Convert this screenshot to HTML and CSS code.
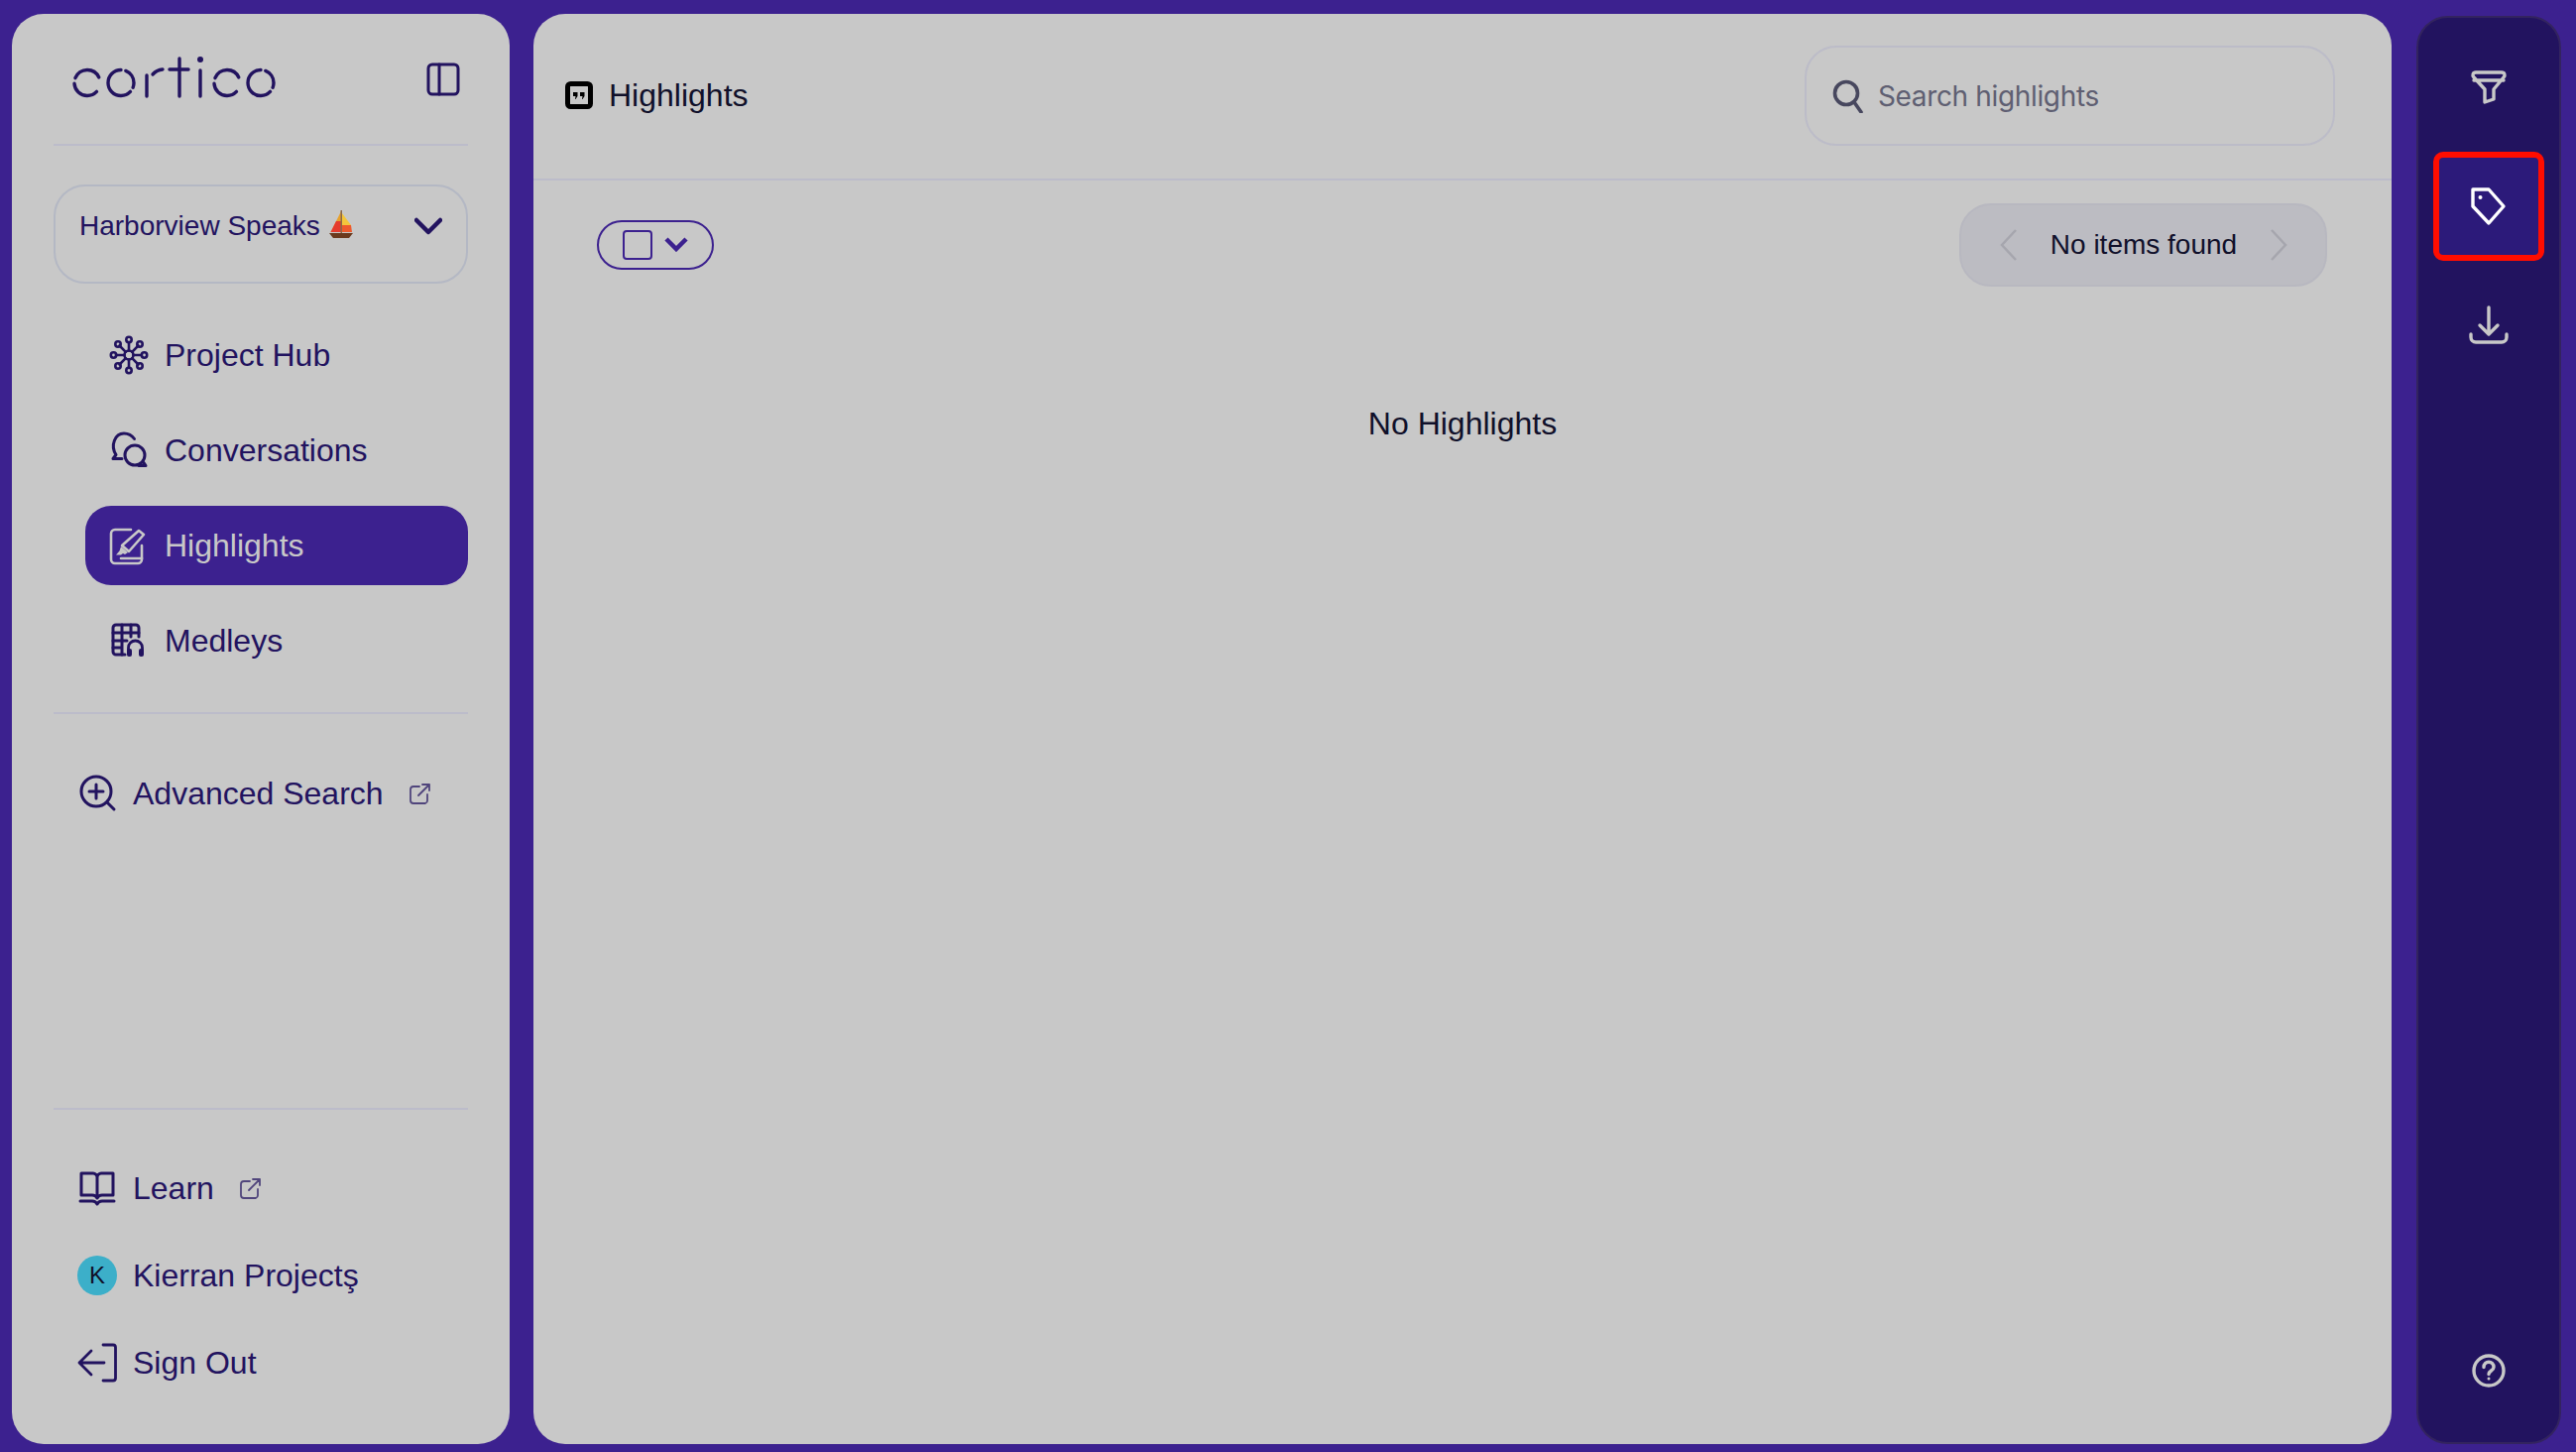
FILE: index.html
```html
<!DOCTYPE html>
<html lang="en">
<head>
<meta charset="utf-8">
<title>Cortico Highlights</title>
<link rel="stylesheet" href="styles.css">
</head>
<body>
<div class="app">
  <aside class="sidebar">
    <div class="logo-row">
      <svg class="logo" role="img" aria-label="cortico" width="210" height="44" viewBox="0 0 210 44">
        <g class="logo-strokes">
          <circle cx="15" cy="27.5" r="13" pathLength="100" stroke-dasharray="37 7 37 19" stroke-dashoffset="-12"/>
          <circle cx="49" cy="27.5" r="13" pathLength="100" stroke-dasharray="6 6 63 6 19" stroke-dashoffset="0"/>
          <line x1="75" y1="20" x2="75" y2="41"/>
          <path d="M81 19q4-4.500 10-5"/>
          <line x1="108" y1="3" x2="108" y2="41"/>
          <line x1="98" y1="14" x2="117" y2="14"/>
          <line x1="129" y1="15" x2="129" y2="41"/>
          <circle class="logo-dot" cx="129" cy="4" r="3"/>
          <circle cx="156" cy="27.500" r="13" pathLength="100" stroke-dasharray="37 7 37 19" stroke-dashoffset="-12"/>
          <circle cx="190" cy="27.500" r="13" pathLength="100" stroke-dasharray="6 6 63 6 19" stroke-dashoffset="0"/>
        </g>
      </svg>
      <svg class="ico" width="34" height="34" viewBox="0 0 34 34" stroke-width="3"><rect x="2" y="2" width="30" height="30" rx="4"/><line x1="13" y1="2" x2="13" y2="32"/></svg>
    </div>

    <div class="selector">
      <span class="selector-name">Harborview Speaks
        <svg class="boat" width="24" height="28" viewBox="0 0 24 28"><path fill="#e8a12c" d="M12 1 1.500 22H12z"/><path fill="#e53b2e" d="M7 11 1.500 22H12V11z"/><path fill="#f4c63c" d="M13 3l9 12h-9z"/><path fill="#ee5a2e" d="M13 15h9l1 7H13z"/><rect x="11.500" y="0" width="1.500" height="25" fill="#8a6a4a"/><path fill="#6b3a1e" d="M0 23h24l-4 5H4z"/></svg>
      </span>
      <svg class="ico chevron" width="28" height="18" viewBox="0 0 28 18" stroke-width="4.500"><path d="M2 3l12 12L26 3"/></svg>
    </div>

    <nav class="nav">
      <a class="nav-item">
        <svg class="ico" width="40" height="40" viewBox="0 0 40 40" stroke-width="2.600">
          <circle cx="20" cy="20" r="4.500"/>
          <path d="M20 15.500V7M20 24.500V33M15.500 20H7M24.500 20H33M16.800 16.800 10.500 10.500M23.200 16.800 29.500 10.500M16.800 23.200 10.500 29.500M23.200 23.200 29.500 29.500"/>
          <circle cx="20" cy="4.500" r="2.700"/><circle cx="20" cy="35.500" r="2.700"/><circle cx="4.500" cy="20" r="2.700"/><circle cx="35.500" cy="20" r="2.700"/>
          <circle cx="9" cy="9" r="2.700"/><circle cx="31" cy="9" r="2.700"/><circle cx="9" cy="31" r="2.700"/><circle cx="31" cy="31" r="2.700"/>
        </svg>
        <span>Project Hub</span>
      </a>
      <a class="nav-item">
        <svg class="ico" width="40" height="40" viewBox="0 0 40 40" stroke-width="3">
          <path d="M13 28.500H4l3-4C1 15 6 3 15 3c4.500 0 8 2 10.500 5.500"/>
          <circle cx="26" cy="25" r="10"/>
          <path d="M30 35.500h7l-2-3"/>
        </svg>
        <span>Conversations</span>
      </a>
      <a class="nav-item is-active">
        <svg class="ico" width="40" height="40" viewBox="0 0 40 40" stroke-width="2.600">
          <path d="M22 4H6a4 4 0 0 0-4 4v26a4 4 0 0 0 4 4h23a4 4 0 0 0 4-4V20"/>
          <path d="M13 20 30 5l5 4-15 17z"/>
          <path class="fill" d="M12 21l7 6-3 2-2-1-2 1.500H7l3.500-4z"/>
          <line x1="12" y1="33" x2="33" y2="33"/>
        </svg>
        <span>Highlights</span>
      </a>
      <a class="nav-item">
        <svg class="ico" width="40" height="40" viewBox="0 0 40 40" stroke-width="3">
          <path d="M16 34H7a3 3 0 0 1-3-3V7a3 3 0 0 1 3-3h20a3 3 0 0 1 3 3v9"/>
          <path d="M13 4v30M22 4v12M4 12h26M4 20h14M4 27h9"/>
          <path d="M19.500 31v-4a7 7 0 0 1 14 0v4" stroke-width="2.800"/>
          <rect class="fill" x="18" y="28" width="5" height="8" rx="2"/><rect class="fill" x="30" y="28" width="5" height="8" rx="2"/>
        </svg>
        <span>Medleys</span>
      </a>
    </nav>

    <a class="side-link side-link-search">
      <svg class="ico" width="40" height="40" viewBox="0 0 40 40" stroke-width="3">
        <circle cx="19" cy="18" r="15"/><path d="M30 29l7 7M19 11v14M12 18h14"/>
      </svg>
      <span>Advanced Search</span>
      <svg class="ico ext" width="22" height="22" viewBox="0 0 22 22" stroke-width="1.800"><path d="M10 4H4a3 3 0 0 0-3 3v11a3 3 0 0 0 3 3h12a3 3 0 0 0 2-3v-6M9 13 20 2M13 2h7v6"/></svg>
    </a>

    <div class="side-bottom">
      <a class="side-link">
        <svg class="ico" width="40" height="40" viewBox="0 0 40 40" stroke-width="3">
          <path d="M4 5h12c2 0 4 2 4 4v21c-1-2-3-3-5-3H4zM36 5H24c-2 0-4 2-4 4v21c1-2 3-3 5-3h11z"/>
          <path d="M3 33h12c2 0 4 1 5 3 1-2 3-3 5-3h12"/>
        </svg>
        <span>Learn</span>
        <svg class="ico ext" width="22" height="22" viewBox="0 0 22 22" stroke-width="1.800"><path d="M10 4H4a3 3 0 0 0-3 3v11a3 3 0 0 0 3 3h12a3 3 0 0 0 2-3v-6M9 13 20 2M13 2h7v6"/></svg>
      </a>
      <a class="side-link">
        <span class="avatar">K</span>
        <span>Kierran Projectş</span>
      </a>
      <a class="side-link">
        <svg class="ico" width="40" height="40" viewBox="0 0 40 40" stroke-width="3">
          <path d="M26 2h10a2.500 2.500 0 0 1 2.500 2.500v31A2.500 2.500 0 0 1 36 38H26M27 20H2M14 8 2 20l12 12" stroke-width="2.800"/>
        </svg>
        <span>Sign Out</span>
      </a>
    </div>
  </aside>

  <main class="main">
    <header class="main-header">
      <div class="title">
        <svg width="28" height="28" viewBox="0 0 28 28" class="title-icon"><rect x="2.500" y="2.500" width="23" height="23" rx="3"/><path class="title-quote" d="M8 11h4.500v4l-2 3h-.500l.500-3H8zM15 11h4.500v4l-2 3h-.500l.500-3H15z"/></svg>
        <span>Highlights</span>
      </div>
      <div class="search">
        <svg width="32" height="34" viewBox="0 0 32 34" class="search-icon"><circle cx="14" cy="14" r="11.500"/><path d="M22 23l7 10"/></svg>
        <span class="search-text">Search highlights</span>
      </div>
    </header>
    <div class="toolbar">
      <button class="select-btn" type="button">
        <span class="checkbox"></span>
        <svg class="select-chev" width="24" height="16" viewBox="0 0 24 16"><path d="M2 3l10 10L22 3"/></svg>
      </button>
      <div class="pager">
        <svg class="pager-chev" width="18" height="32" viewBox="0 0 18 32"><path d="M16 1 2 16l14 15"/></svg>
        <span>No items found</span>
        <svg class="pager-chev" width="18" height="32" viewBox="0 0 18 32"><path d="M2 1l14 15L2 31"/></svg>
      </div>
    </div>
    <p class="empty">No Highlights</p>
  </main>

  <aside class="rail">
    <button class="rail-btn" type="button">
      <svg width="40" height="40" viewBox="0 0 40 40"><path d="M7 5h26c3 0 4 3 2 5L25 22v10l-9 3V22L5 10C3 8 4 5 7 5zM5 13h30"/></svg>
    </button>
    <button class="rail-btn is-current" type="button">
      <svg width="40" height="40" viewBox="0 0 40 40"><path d="M4 3h16l15 17-15 17L4 20z"/><circle class="rail-dot" cx="11.500" cy="11" r="2"/></svg>
    </button>
    <button class="rail-btn" type="button">
      <svg width="40" height="40" viewBox="0 0 40 40"><path d="M20 2v26M11 20l9 9 9-9M2 29v3a5 5 0 0 0 5 5h26a5 5 0 0 0 5-5v-3"/></svg>
    </button>
    <button class="rail-btn rail-help" type="button">
      <svg width="40" height="40" viewBox="0 0 40 40"><circle cx="20" cy="20" r="15"/><path d="M15 16.500c0-7 10-7 10 0 0 3.500-5 3.500-5 7"/><circle class="rail-dot" cx="20" cy="28" r="1.500"/></svg>
    </button>
  </aside>
</div>
</body>
</html>
```
FILE: styles.css
```css
* { box-sizing: border-box; }
html, body { margin: 0; height: 100%; }
body {
  background: #3c218f;
  font-family: "Liberation Sans", Arial, sans-serif;
  color: #22135f;
  overflow: hidden;
}
.app {
  display: flex;
  height: 1464px;
  padding: 14px 15px 8px 12px;
}

/* Sidebar */
.sidebar {
  flex: 0 0 502px;
  display: flex;
  flex-direction: column;
  padding: 0 42px;
  background: #c8c8c8;
  border-radius: 32px;
}
.ico { fill: none; stroke: currentColor; stroke-linecap: round; stroke-linejoin: round; flex: none; }
.ico .fill { fill: currentColor; stroke: none; }
.logo-row {
  flex: none;
  height: 133px;
  padding: 0 8px 0 19px;
  display: flex;
  align-items: center;
  justify-content: space-between;
  border-bottom: 2px solid #bcbcca;
}
.logo { flex: none; margin-top: -4px; }
.logo-strokes { fill: none; stroke: #22135f; stroke-width: 3.400; stroke-linecap: round; }
.logo-dot { fill: #22135f; stroke: none; }
.selector {
  flex: none;
  height: 100px;
  margin-top: 39px;
  padding: 22px 24px 0 24px;
  display: flex;
  align-items: flex-start;
  justify-content: space-between;
  border: 2px solid #b4b8c4;
  border-radius: 32px;
  font-size: 28px;
  line-height: 36px;
}
.selector-name { display: flex; align-items: center; gap: 9px; white-space: nowrap; }
.boat { flex: none; margin-top: -4px; }
.chevron { margin-top: 9px; }
.nav {
  flex: none;
  display: flex;
  flex-direction: column;
  gap: 16px;
  margin-top: 32px;
  padding-bottom: 32px;
  padding-left: 32px;
  border-bottom: 2px solid #bcbcca;
}
.nav-item {
  height: 80px;
  display: flex;
  align-items: center;
  gap: 16px;
  padding-left: 24px;
  font-size: 32px;
  border-radius: 26px;
}
.is-active { background: #3c218f; color: #c8c8c8; }
.side-link {
  height: 88px;
  display: flex;
  align-items: center;
  gap: 16px;
  padding-left: 24px;
  font-size: 32px;
  white-space: nowrap;
}
.side-link-search { margin-top: 36px; }
.ext { margin-left: 10px; opacity: .72; }
.avatar {
  flex: none;
  width: 40px;
  height: 40px;
  border-radius: 50%;
  background: #3cafc9;
  color: #101028;
  font-size: 24px;
  display: flex;
  align-items: center;
  justify-content: center;
}
.side-bottom {
  margin-top: auto;
  padding: 35px 0 38px;
  border-top: 2px solid #bcbcca;
}

/* Main */
.main {
  flex: 1;
  margin: 0 25px 0 24px;
  display: flex;
  flex-direction: column;
  background: #c8c8c8;
  border-radius: 32px;
  color: #10102a;
}
.main-header {
  flex: none;
  height: 168px;
  padding: 0 57px 0 32px;
  display: flex;
  align-items: center;
  justify-content: space-between;
  border-bottom: 2px solid #bcbcca;
}
.title { display: flex; align-items: center; gap: 16px; font-size: 32px; margin-top: -2px; }
.title-icon { flex: none; }
.title-icon rect { fill: none; stroke: #000; stroke-width: 5; }
.title-quote { fill: #000; }
.search {
  width: 535px;
  height: 101px;
  padding-left: 26px;
  margin-top: -1px;
  display: flex;
  align-items: center;
  gap: 14px;
  border: 2px solid #bcbcc8;
  border-radius: 32px;
}
.search-icon { flex: none; fill: none; stroke: #47475e; stroke-width: 3.600; stroke-linecap: round; }
.search-text { font-family: Inter, sans-serif; font-size: 28px; letter-spacing: -0.35px; color: #5f5f72; }
.toolbar {
  flex: none;
  display: flex;
  align-items: center;
  justify-content: space-between;
  padding: 23px 65px 0 64px;
}
.select-btn {
  width: 118px;
  height: 50px;
  padding: 0 0 0 24px;
  display: flex;
  align-items: center;
  gap: 12px;
  background: none;
  border: 2px solid #3c218f;
  border-radius: 25px;
}
.checkbox { flex: none; width: 30px; height: 30px; border: 2px solid #3c218f; border-radius: 4px; }
.select-chev { flex: none; fill: none; stroke: #3c218f; stroke-width: 4.500; margin-top: -2px; }
.pager {
  width: 371px;
  height: 84px;
  padding: 0 38px 0 39px;
  display: flex;
  align-items: center;
  justify-content: space-between;
  background: #bcbcc2;
  border: 2px solid #b8b8c0;
  border-radius: 32px;
  font-size: 28px;
  color: #10102a;
}
.pager-chev { flex: none; fill: none; stroke: #a6a6ae; stroke-width: 2.500; }
.empty { margin: 120px 0 0; text-align: center; font-size: 32px; line-height: 36px; color: #10102a; }

/* Right rail */
.rail {
  flex: 0 0 146px;
  margin-top: 2px;
  padding: 15px 0 17px;
  display: flex;
  flex-direction: column;
  align-items: center;
  gap: 10px;
  background: #22135f;
  border: 2px solid #33245f;
  border-radius: 32px;
}
.rail-btn {
  flex: none;
  width: 112px;
  height: 110px;
  padding: 0;
  display: flex;
  align-items: center;
  justify-content: center;
  background: none;
  border: 0;
  color: #c8c8c8;
}
.rail-btn svg { fill: none; stroke: currentColor; stroke-width: 3.400; stroke-linejoin: round; stroke-linecap: round; }
.rail-btn .rail-dot { fill: currentColor; stroke: none; }
.is-current {
  color: #fff;
  background: #2c1a7a;
  border: 6px solid #ff0d00;
  border-radius: 10px;
}
.rail-help { margin-top: auto; }
```
